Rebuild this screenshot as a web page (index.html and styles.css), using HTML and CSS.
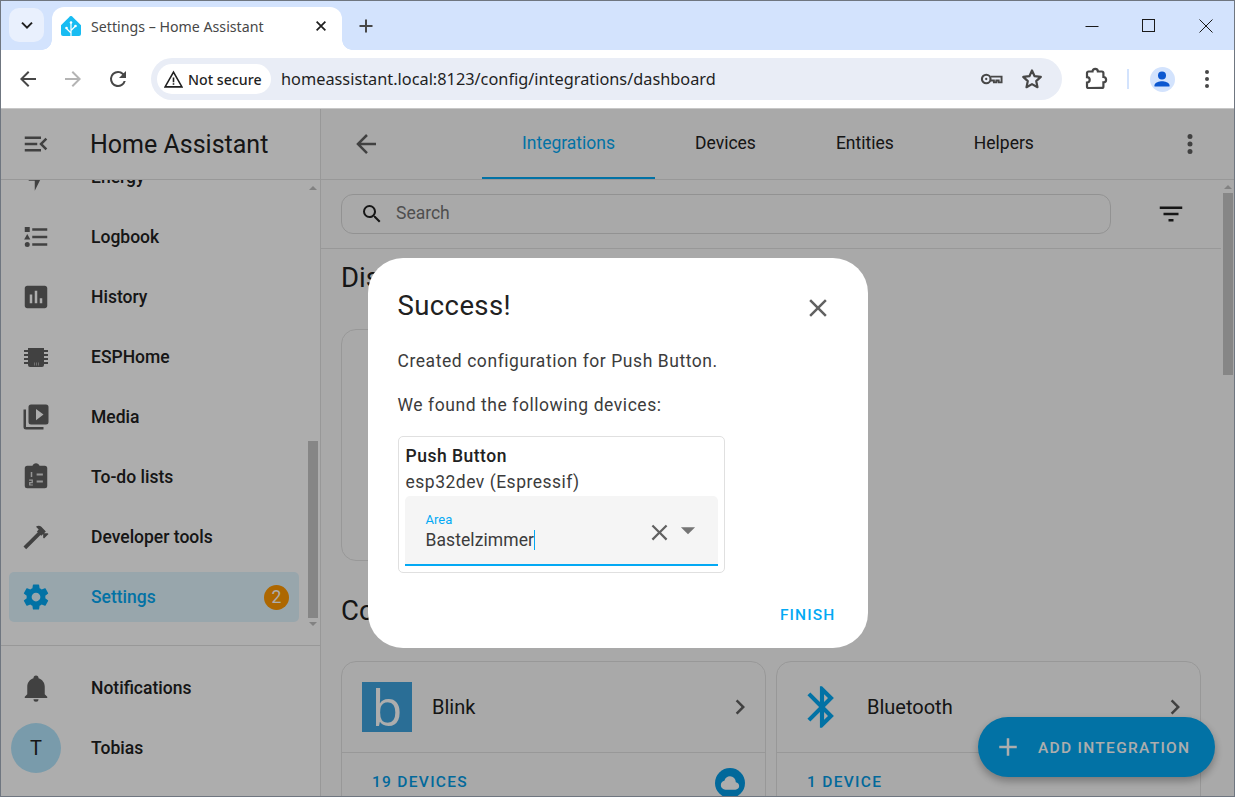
FILE: index.html
```html
<!DOCTYPE html>
<html lang="en">
<head>
<meta charset="utf-8">
<title>Settings – Home Assistant</title>
<link rel="stylesheet" href="styles.css">
</head>
<body>
<div class="window">
  <div class="tabstrip">
    <div class="tab-search"><svg class="ic16" viewBox="0 0 16 16"><path d="M3 5.6 8 10.6 13 5.6" fill="none" stroke="#1f1f1f" stroke-width="2"/></svg></div>
    <div class="tab">
      <svg class="favicon" viewBox="0 0 20 20"><path d="M8.800 .5a1.700 1.700 0 0 1 2.400 0L20 9.300V18a2 2 0 0 1-2 2H2a2 2 0 0 1-2-2V9.300z" fill="#18bcf2"/><path d="M10 20V6.500M10 17 5.500 12.500M10 14.500l4.500-4.500" fill="none" stroke="#fff" stroke-width="1.200"/><circle cx="10" cy="6.500" r="1.300" fill="#fff"/><circle cx="5.500" cy="12" r="1.300" fill="#fff"/><circle cx="14.500" cy="10" r="1.300" fill="#fff"/></svg>
      <span class="tab-title">Settings – Home Assistant</span>
      <svg class="tab-close" viewBox="0 0 16 16"><path d="M3 3 13 13M13 3 3 13" stroke="#1f1f1f" stroke-width="2" fill="none"/></svg>
    </div>
    <svg class="new-tab" viewBox="0 0 16 16"><path d="M8 1.500V14.500M1.500 8H14.500" stroke="#474747" stroke-width="2" fill="none"/></svg>
    <div class="win-controls">
      <div class="win-btn"><svg class="ic14" viewBox="0 0 14 14"><path d="M0.500 7.500H13.500" stroke="#1a1a1a" fill="none"/></svg></div>
      <div class="win-btn"><svg class="ic14" viewBox="0 0 14 14"><rect x="0.500" y="0.500" width="12" height="12" stroke="#1a1a1a" fill="none"/></svg></div>
      <div class="win-btn"><svg class="ic14" viewBox="0 0 14 14"><path d="M0.500 0.500 13.500 13.500M13.500 0.500 0.500 13.500" stroke="#1a1a1a" fill="none"/></svg></div>
    </div>
  </div>

  <div class="toolbar">
    <div class="tb-btn"><svg class="ic24" viewBox="0 0 24 24"><path d="M20 11H7.830l5.590-5.590L12 4l-8 8 8 8 1.410-1.410L7.830 13H20z" fill="#474747"/></svg></div>
    <div class="tb-btn"><svg class="ic24" viewBox="0 0 24 24"><path d="M4 11h12.170l-5.590-5.590L12 4l8 8-8 8-1.410-1.410L16.170 13H4z" fill="#b4b4b4"/></svg></div>
    <div class="tb-btn"><svg class="ic24" viewBox="0 0 24 24"><path d="M17.650 6.350A7.960 7.960 0 0 0 12 4a8 8 0 1 0 7.730 10h-2.080A6 6 0 1 1 12 6c1.660 0 3.140.69 4.220 1.780L13 11h7V4z" fill="#474747"/></svg></div>
    <div class="omnibox">
      <div class="not-secure">
        <svg class="warn" viewBox="0 0 18 18"><path d="M9 2 17 16H1z" fill="none" stroke="#1f1f1f" stroke-width="1.500"/><path d="M9 7V11.500M9 12.500V14" stroke="#1f1f1f" stroke-width="1.500" fill="none"/></svg>
        <span>Not secure</span>
      </div>
      <span class="url">homeassistant.local:8123/config/integrations/dashboard</span>
      <svg class="omni-key" viewBox="0 0 24 14"><circle cx="6.500" cy="7" r="4.500" fill="none" stroke="#474747" stroke-width="2.200"/><circle cx="6.500" cy="7" r="1.200" fill="#474747"/><path d="M11 4.500H22.500V10.500H19.500V8.500H17V10.500H14.500V8.500H11" fill="none" stroke="#474747" stroke-width="2"/></svg>
      <svg class="omni-star" viewBox="0 0 24 24"><path d="M12 3.500l2.600 5.700 6.200.7-4.600 4.200 1.300 6.100L12 17.100l-5.500 3.100 1.300-6.100-4.600-4.200 6.200-.7z" fill="none" stroke="#474747" stroke-width="2.200" stroke-linejoin="round"/></svg>
    </div>
    <svg class="ext" viewBox="0 0 24 24"><path d="M4.500 21a1.500 1.500 0 0 1-1.500-1.500v-4a2.700 2.700 0 0 0 0-5.400V6a1.500 1.500 0 0 1 1.500-1.500h4a2.700 2.700 0 0 1 5.400 0h4A1.500 1.500 0 0 1 19.400 6v4a2.700 2.700 0 0 1 0 5.400v4a1.500 1.500 0 0 1-1.500 1.500z" fill="none" stroke="#474747" stroke-width="2.200"/></svg>
    <div class="tb-sep"></div>
    <div class="profile"><svg class="ic24" viewBox="0 0 24 24"><circle cx="12" cy="8.500" r="4" fill="#0b57d0"/><path d="M4.500 19.500v-1.300c0-2.600 5-4 7.500-4s7.500 1.400 7.500 4v1.300z" fill="#0b57d0"/></svg></div>
    <svg class="tb-dots" viewBox="0 0 6 20"><circle cx="3" cy="3" r="2" fill="#474747"/><circle cx="3" cy="10" r="2" fill="#474747"/><circle cx="3" cy="17" r="2" fill="#474747"/></svg>
  </div>

  <div class="app">
    <aside class="sidebar">
      <div class="side-head">
        <svg class="icon" viewBox="0 0 24 24"><path d="M21,15.610L19.590,17L14.580,12L19.590,7L21,8.390L17.440,12L21,15.610M3,6H16V8H3V6M3,13V11H13V13H3M3,18V16H16V18H3Z"/></svg>
        <span class="side-title">Home Assistant</span>
      </div>
      <div class="nav-wrap">
        <div class="nav-scroll">
          <div class="nav-list">
            <div class="nav-item"><svg class="icon" viewBox="0 0 24 24"><path d="M11 15H6L13 1V9H18L11 23V15Z"/></svg><span>Energy</span></div>
            <div class="nav-item"><svg class="icon" viewBox="0 0 24 24"><path d="M5,9.500L7.500,14H2.500L5,9.500M3,4H7V8H3V4M5,20A2,2 0 0,0 7,18A2,2 0 0,0 5,16A2,2 0 0,0 3,18A2,2 0 0,0 5,20M9,5V7H21V5H9M9,19H21V17H9V19M9,13H21V11H9V13Z"/></svg><span>Logbook</span></div>
            <div class="nav-item"><svg class="icon" viewBox="0 0 24 24"><path d="M19 3H5C3.900 3 3 3.900 3 5V19C3 20.100 3.900 21 5 21H19C20.100 21 21 20.100 21 19V5C21 3.900 20.100 3 19 3M9 17H7V10H9V17M13 17H11V7H13V17M17 17H15V13H17V17Z"/></svg><span>History</span></div>
            <div class="nav-item"><svg class="icon" viewBox="0 0 30 30"><path d="M7 6H23V8H27V10H23V12H27V14H23V16H27V18H23V20H27V22H23V23a2 2 0 0 1-2 2H9a2 2 0 0 1-2-2V22H3V20H7V18H3V16H7V14H3V12H7V10H3V8H7z"/><path d="M13 20.500h.8v3h-.8zM15 20.500h.8v3h-.8zM17 20.500h.8v3h-.8z" fill="#fff" opacity=".55"/></svg><span>ESPHome</span></div>
            <div class="nav-item"><svg class="icon" viewBox="0 0 24 24"><path d="M4,6H2V20A2,2 0 0,0 4,22H18V20H4V6M20,2H8A2,2 0 0,0 6,4V16A2,2 0 0,0 8,18H20A2,2 0 0,0 22,16V4A2,2 0 0,0 20,2M12,14.500V5.500L18,10L12,14.500Z"/></svg><span>Media</span></div>
            <div class="nav-item"><svg class="icon" viewBox="0 0 24 24"><path d="M19 3H14.820C14.400 1.840 13.300 1 12 1C10.700 1 9.600 1.840 9.180 3H5A2 2 0 0 0 3 5V19A2 2 0 0 0 5 21H19A2 2 0 0 0 21 19V5A2 2 0 0 0 19 3Z"/><path d="M12.500 9.200h5v1.500h-5zM12.500 14.800h5v1.500h-5zM7.800 8h1.200v4h-1.200zM6.500 14h3v1h-3zM8.500 15h1v1h-1zM6.500 16h3v1h-3zM6.500 17h1v1h-1zM6.500 18h3v.7h-3z" fill="#ddd"/></svg><span>To-do lists</span></div>
            <div class="nav-item"><svg class="icon" viewBox="0 0 24 24"><path d="M2 19.630L13.430 8.200L12.720 7.500L14.140 6.070L12 3.890C13.200 2.700 15.090 2.700 16.270 3.890L19.870 7.500L18.450 8.910H21.290L22 9.620L18.450 13.210L17.740 12.500V9.620L16.270 11.040L15.560 10.330L4.130 21.760L2 19.630Z"/></svg><span>Developer tools</span></div>
            <div class="nav-item nav-active"><svg class="icon" viewBox="0 0 24 24"><path d="M12,15.500A3.500,3.500 0 0,1 8.500,12A3.500,3.500 0 0,1 12,8.500A3.500,3.500 0 0,1 15.500,12A3.500,3.500 0 0,1 12,15.500M19.430,12.970C19.470,12.650 19.500,12.330 19.500,12C19.500,11.670 19.470,11.340 19.430,11L21.540,9.370C21.730,9.220 21.780,8.950 21.660,8.730L19.660,5.270C19.540,5.050 19.270,4.960 19.050,5.050L16.560,6.050C16.040,5.660 15.500,5.320 14.870,5.070L14.500,2.420C14.460,2.180 14.250,2 14,2H10C9.750,2 9.540,2.180 9.500,2.420L9.130,5.070C8.500,5.320 7.960,5.660 7.440,6.050L4.950,5.050C4.730,4.960 4.460,5.050 4.340,5.270L2.340,8.730C2.210,8.950 2.270,9.220 2.460,9.370L4.570,11C4.530,11.340 4.500,11.670 4.500,12C4.500,12.330 4.530,12.650 4.570,12.970L2.460,14.630C2.270,14.780 2.210,15.050 2.340,15.270L4.340,18.730C4.460,18.950 4.730,19.030 4.950,18.950L7.440,17.940C7.960,18.340 8.500,18.680 9.130,18.930L9.500,21.580C9.540,21.820 9.750,22 10,22H14C14.250,22 14.460,21.820 14.500,21.580L14.870,18.930C15.500,18.670 16.040,18.340 16.560,17.940L19.050,18.950C19.270,19.030 19.540,18.950 19.660,18.730L21.660,15.270C21.780,15.050 21.730,14.780 21.540,14.630L19.430,12.970Z"/></svg><span>Settings</span><b class="badge">2</b></div>
          </div>
        </div>
        <div class="side-scrollbar">
          <i class="arrow-up"></i>
          <div class="side-track"><div class="side-thumb"></div></div>
          <i class="arrow-down"></i>
        </div>
      </div>
      <div class="side-foot">
        <div class="nav-item"><svg class="icon" viewBox="0 0 24 24"><path d="M21,19V20H3V19L5,17V11C5,7.900 7.030,5.170 10,4.290C10,4.190 10,4.100 10,4A2,2 0 0,1 12,2A2,2 0 0,1 14,4C14,4.100 14,4.190 14,4.290C16.970,5.170 19,7.900 19,11V17L21,19M14,21A2,2 0 0,1 12,23A2,2 0 0,1 10,21"/></svg><span>Notifications</span></div>
        <div class="nav-item user"><div class="avatar">T</div><span>Tobias</span></div>
      </div>
    </aside>

    <main class="main">
      <header class="main-head">
        <svg class="icon back" viewBox="0 0 24 24"><path d="M20,11V13H8L13.500,18.500L12.080,19.920L4.160,12L12.080,4.080L13.500,5.500L8,11H20Z"/></svg>
        <nav class="tabs">
          <div class="ha-tab ha-tab-active">Integrations</div>
          <div class="ha-tab">Devices</div>
          <div class="ha-tab">Entities</div>
          <div class="ha-tab">Helpers</div>
        </nav>
        <svg class="icon more" viewBox="0 0 24 24"><path d="M12,16A2,2 0 0,1 14,18A2,2 0 0,1 12,20A2,2 0 0,1 10,18A2,2 0 0,1 12,16M12,10A2,2 0 0,1 14,12A2,2 0 0,1 12,14A2,2 0 0,1 10,12A2,2 0 0,1 12,10M12,4A2,2 0 0,1 14,6A2,2 0 0,1 12,8A2,2 0 0,1 10,6A2,2 0 0,1 12,4Z"/></svg>
      </header>
      <div class="main-body">
        <div class="main-scroll">
          <div class="search-row">
            <div class="search-box">
              <svg class="search-ic" viewBox="0 0 24 24"><path d="M9.500,3A6.500,6.500 0 0,1 16,9.500C16,11.110 15.410,12.590 14.440,13.730L14.710,14H15.500L20.500,19L19,20.500L14,15.500V14.710L13.730,14.440C12.590,15.410 11.110,16 9.500,16A6.500,6.500 0 0,1 3,9.500A6.500,6.500 0 0,1 9.500,3M9.500,5C7,5 5,7 5,9.500C5,12 7,14 9.500,14C12,14 14,12 14,9.500C14,7 12,5 9.500,5Z"/></svg>
              <span class="search-text">Search</span>
            </div>
            <svg class="filter-ic" viewBox="0 0 24 24"><path d="M6,13H18V11H6M3,6V8H21V6M10,18H14V16H10V18Z"/></svg>
          </div>
          <div class="content">
            <h2 class="section">Discovered</h2>
            <div class="disc-card"></div>
            <h2 class="section section-next">Configured</h2>
            <div class="cards">
              <article class="card">
                <div class="card-head">
                  <div class="blink-logo">b</div>
                  <span class="card-name">Blink</span>
                  <svg class="icon chev" viewBox="0 0 24 24"><path d="M8.590,16.580L13.170,12L8.590,7.410L10,6L16,12L10,18L8.590,16.580Z"/></svg>
                </div>
                <div class="card-foot">
                  <span class="count">19 DEVICES</span>
                  <div class="cloud"><svg viewBox="0 0 24 24"><path d="M6.500 20Q4.220 20 2.610 18.430 1 16.850 1 14.580 1 12.630 2.170 11.100 3.350 9.570 5.250 9.150 5.880 6.850 7.750 5.430 9.630 4 12 4 14.930 4 16.960 6.040 19 8.070 19 11 20.730 11.200 21.860 12.500 23 13.780 23 15.500 23 17.380 21.690 18.690 20.380 20 18.500 20Z"/></svg></div>
                </div>
              </article>
              <article class="card">
                <div class="card-head">
                  <svg class="bt-logo" viewBox="0 0 24 24"><path d="M14.880,16.290L13,18.170V14.410M13,5.830L14.880,7.710L13,9.580M17.710,7.710L12,2H11V9.580L6.410,5L5,6.410L10.590,12L5,17.580L6.410,19L11,14.410V22H12L17.710,16.290L13.410,12L17.710,7.710Z"/></svg>
                  <span class="card-name">Bluetooth</span>
                  <svg class="icon chev" viewBox="0 0 24 24"><path d="M8.590,16.580L13.170,12L8.590,7.410L10,6L16,12L10,18L8.590,16.580Z"/></svg>
                </div>
                <div class="card-foot">
                  <span class="count">1 DEVICE</span>
                </div>
              </article>
            </div>
          </div>
        </div>
        <div class="main-scrollbar">
          <i class="arrow-up"></i>
          <div class="main-thumb"></div>
        </div>
      </div>
      <div class="fab">
        <svg viewBox="0 0 24 24"><path d="M19,13H13V19H11V13H5V11H11V5H13V11H19V13Z"/></svg>
        <span>ADD INTEGRATION</span>
      </div>
    </main>

    <div class="scrim">
      <section class="dialog">
        <div class="dialog-head">
          <h1>Success!</h1>
          <svg class="dialog-close" viewBox="0 0 24 24"><path d="M19,6.410L17.590,5L12,10.590L6.410,5L5,6.410L10.590,12L5,17.590L6.410,19L12,13.410L17.590,19L19,17.590L13.410,12L19,6.410Z"/></svg>
        </div>
        <p class="dialog-text">Created configuration for Push Button.</p>
        <p class="dialog-text dialog-text-2">We found the following devices:</p>
        <div class="device">
          <div class="device-name">Push Button</div>
          <div class="device-model">esp32dev (Espressif)</div>
          <div class="field">
            <div class="field-text">
              <div class="field-label">Area</div>
              <div class="field-value">Bastelzimmer<i class="caret"></i></div>
            </div>
            <svg class="field-x" viewBox="0 0 24 24"><path d="M19,6.410L17.590,5L12,10.590L6.410,5L5,6.410L10.590,12L5,17.590L6.410,19L12,13.410L17.590,19L19,17.590L13.410,12L19,6.410Z"/></svg>
            <svg class="field-drop" viewBox="0 0 24 24"><path d="M7,10L12,15L17,10H7Z"/></svg>
          </div>
        </div>
        <div class="dialog-actions"><span class="finish">FINISH</span></div>
      </section>
    </div>
  </div>
</div>
</body>
</html>
```
FILE: styles.css
```css
* { box-sizing: border-box; }
html, body { margin: 0; padding: 0; height: 100%; overflow: hidden; }
body { font-family: Roboto, "Liberation Sans", sans-serif; color: #212121; background: #fff; }

.window { width: 1235px; height: 797px; display: flex; flex-direction: column; border: 1px solid #6f7680; overflow: hidden; position: relative; }

/* Browser chrome */
.tabstrip { height: 49px; flex: none; background: #d3e3fd; display: flex; align-items: flex-end; padding-left: 8px; }
.tab-search { width: 35px; height: 34px; margin-bottom: 8px; border-radius: 10px; background: #e9f0fd; display: flex; align-items: center; justify-content: center; }
.ic16 { width: 16px; height: 16px; }
.ic14 { width: 14px; height: 14px; display: block; }
.ic24 { width: 24px; height: 24px; display: block; }
.tab { position: relative; margin-left: 8px; width: 290px; height: 43px; background: #fff; border-radius: 12px 12px 0 0; display: flex; align-items: center; padding: 0 14px 5px 9px; }
.tab::before, .tab::after { content: ""; position: absolute; bottom: 0; width: 10px; height: 10px; background: radial-gradient(circle at 0 0, #d3e3fd 9.5px, #fff 10px); }
.tab::before { left: -10px; }
.tab::after { right: -10px; background: radial-gradient(circle at 100% 0, #d3e3fd 9.5px, #fff 10px); }
.favicon { width: 20px; height: 20px; flex: none; }
.tab-title { margin-left: 10px; flex: 1; font: 14.2px "Noto Sans", sans-serif; color: #474747; white-space: nowrap; }
.tab-close { width: 14px; height: 14px; }
.new-tab { width: 16px; height: 16px; margin: 0 0 16px 16px; }
.win-controls { margin-left: auto; display: flex; align-self: stretch; }
.win-btn { width: 57px; display: flex; align-items: center; justify-content: center; }

.toolbar { height: 59px; flex: none; background: #fff; border-bottom: 1px solid #c7c7c7; border-radius: 9px 9px 0 0; display: flex; align-items: center; padding-left: 4px; position: relative; }
.tb-btn { width: 45px; display: flex; justify-content: center; }
.omnibox { margin-left: 11px; width: 911px; height: 42px; border-radius: 21px; background: #e9edf6; display: flex; align-items: center; padding: 0 18px 0 6px; }
.not-secure { width: 114px; height: 30px; border-radius: 15px; background: #fff; display: flex; align-items: center; padding-left: 7px; font: 500 14.2px "Noto Sans", sans-serif; color: #1f1f1f; white-space: nowrap; }
.warn { width: 19px; height: 19px; margin-right: 5px; flex: none; }
.url { margin-left: 10px; flex: 1; font: 16.32px "Noto Sans", sans-serif; color: #1f1f1f; white-space: nowrap; }
.omni-key { width: 23px; height: 14px; }
.omni-star { width: 24px; height: 24px; margin-left: 17px; }
.ext { width: 24px; height: 24px; margin-left: 22px; }
.tb-sep { width: 2px; height: 20px; margin-left: 19px; background: #d3e3fd; }
.profile { width: 25px; height: 25px; margin-left: 21px; border-radius: 50%; background: #d3e3fd; overflow: hidden; }
.tb-dots { width: 6px; height: 20px; margin-left: 29px; }

/* App */
.app { flex: 1; min-height: 0; display: flex; position: relative; background: #fafafa; }
.icon { width: 30px; height: 30px; flex: none; fill: #616161; display: block; }

.sidebar { width: 320px; flex: none; background: #fff; border-right: 1px solid #e0e0e0; display: flex; flex-direction: column; }
.side-head { height: 71px; flex: none; display: flex; align-items: center; padding-left: 20px; border-bottom: 1px solid #e0e0e0; padding-bottom: 1px; }
.side-title { margin-left: 39px; padding-top: 2px; font-size: 25px; white-space: nowrap; }
.nav-wrap { height: 465px; flex: none; display: flex; overflow: hidden; }
.nav-scroll { flex: 1; overflow: hidden; }
.nav-list { margin-top: -28px; display: flex; flex-direction: column; gap: 10px; padding: 0 0 0 8px; }
.nav-item { height: 50px; display: flex; align-items: center; padding-left: 12px; border-radius: 5px; font-size: 17.500px; font-weight: 500; color: #212121; white-space: nowrap; }
.nav-item span { margin-left: 40px; }
.nav-active { color: #03a9f4; background: rgba(3, 169, 244, .12); }
.nav-active .icon { fill: #03a9f4; }
.badge { margin-left: auto; margin-right: 10px; width: 25px; height: 25px; border-radius: 50%; background: #ff9800; color: #fff; font-weight: 400; font-size: 17.500px; display: flex; align-items: center; justify-content: center; }
.side-scrollbar { width: 21px; flex: none; display: flex; flex-direction: column; align-items: flex-start; padding: 6px 0 0 9px; }
.arrow-up, .arrow-down { display: block; width: 0; height: 0; border-left: 4px solid transparent; border-right: 4px solid transparent; margin-left: 1px; }
.arrow-up { border-bottom: 4px solid #c0c0c0; }
.arrow-down { border-top: 4px solid #c0c0c0; margin-top: 4px; }
.side-track { height: 428px; width: 10px; display: flex; flex-direction: column; justify-content: flex-end; }
.side-thumb { height: 177px; background: #c6c6c6; }
.side-foot { flex: 1; border-top: 1px solid #e0e0e0; padding: 17px 8px 0; display: flex; flex-direction: column; gap: 10px; }
.user { padding-left: 2px; }
.user span { margin-left: 30px; }
.avatar { width: 50px; height: 50px; border-radius: 50%; background: #b3e5fc; display: flex; align-items: center; justify-content: center; font-size: 20px; font-weight: 400; flex: none; }

.main { flex: 1; min-width: 0; display: flex; flex-direction: column; position: relative; overflow: hidden; }
.main-head { height: 71px; flex: none; display: flex; align-items: center; border-bottom: 1px solid #e0e0e0; padding-left: 30px; }
.tabs { margin-left: 101px; align-self: stretch; display: flex; }
.ha-tab { padding: 0 40px; display: flex; align-items: center; font-size: 17.500px; color: #212121; border-bottom: 2px solid transparent; white-space: nowrap; }
.ha-tab-active { color: #03a9f4; border-bottom-color: #03a9f4; }
.more { margin-left: auto; margin-right: 29px; }
.main-body { flex: 1; min-height: 0; display: flex; }
.main-scroll { flex: 1; min-width: 0; overflow: hidden; }
.main-scrollbar { width: 13px; flex: none; padding: 5px 1px 0 2px; display: flex; flex-direction: column; }
.main-thumb { margin-top: 4px; height: 182px; background: #c6c6c6; }
.search-row { height: 69px; display: flex; align-items: center; border-bottom: 1px solid #e0e0e0; padding-left: 20px; }
.search-box { width: 770px; height: 40px; border: 1px solid #d8d8d8; border-radius: 12px; display: flex; align-items: center; padding-left: 18px; color: #757575; font-size: 17.500px; }
.search-ic { width: 24px; height: 24px; fill: #212121; margin-right: 12px; }
.search-text { padding-bottom: 2px; }
.filter-ic { width: 30px; height: 30px; fill: #212121; margin-left: 45px; }
.content { padding: 9px 0 0 20px; }
.section { margin: 0; font-size: 27.500px; font-weight: 400; line-height: 40px; color: #212121; white-space: nowrap; }
.section-next { margin-top: 30px; }
.disc-card { margin-top: 31px; width: 425px; height: 232px; border: 1px solid #e0e0e0; border-radius: 15px; }
.cards { margin-top: 30px; display: flex; gap: 10px; }
.card { width: 425px; height: 180px; flex: none; border: 1px solid #e0e0e0; border-radius: 15px; background: #fafafa; }
.card-head { height: 91px; display: flex; align-items: center; padding: 0 10px 0 20px; border-bottom: 1px solid #e0e0e0; }
.blink-logo { width: 50px; height: 50px; flex: none; background: #3fa3dd; color: #fff; font: 50px/50px "Open Sans", sans-serif; text-align: center; overflow: hidden; }
.bt-logo { width: 50px; height: 50px; flex: none; fill: #03a9f4; }
.card-name { margin-left: 20px; flex: 1; font-size: 20px; color: #212121; }
.chev { flex: none; }
.card-foot { height: 60px; display: flex; align-items: flex-start; justify-content: space-between; padding: 15px 20px 0 30px; }
.count { font-size: 15.500px; font-weight: 500; letter-spacing: 1.300px; color: #039be5; line-height: 30px; margin-top: -1px; }
.cloud { width: 30px; height: 30px; border-radius: 50%; background: #039be5; display: flex; align-items: center; justify-content: center; }
.cloud svg { width: 20px; height: 20px; fill: #fff; }

.fab { position: absolute; left: 657px; top: 608px; width: 237px; height: 60px; border-radius: 30px; background: #03a9f4; color: #fff; display: flex; align-items: center; padding-left: 15px; box-shadow: 0 4px 8px rgba(0,0,0,.3); }
.fab svg { width: 30px; height: 30px; fill: #fff; flex: none; }
.fab span { margin-left: 15px; padding-top: 2px; font-size: 15.500px; font-weight: 500; letter-spacing: 1.300px; white-space: nowrap; }

/* Dialog */
.scrim { position: absolute; inset: 0; background: rgba(0, 0, 0, .32); display: flex; align-items: center; justify-content: center; }
.dialog { width: 500px; height: 390px; background: #fff; border-radius: 35px; padding: 0 30px; display: flex; flex-direction: column; }
.dialog-head { height: 93px; display: flex; align-items: flex-start; justify-content: space-between; padding-top: 29px; flex: none; }
.dialog-head h1 { margin: 0; font-size: 27.500px; font-weight: 400; line-height: 38px; letter-spacing: .4px; color: #212121; }
.dialog-close { width: 30px; height: 30px; fill: #616161; margin: 6px 5px 0 0; }
.dialog-text { margin: 0; font-size: 17.500px; line-height: 20px; letter-spacing: .56px; color: #3c3c3c; }
.dialog-text-2 { margin-top: 24px; }
.device { margin-top: 21px; width: 327px; height: 137px; border: 1px solid #e0e0e0; border-radius: 5px; padding: 6px 6px 0 6px; flex: none; }
.device-name { padding-left: 1px; font-size: 17.500px; font-weight: 500; line-height: 26px; letter-spacing: .5px; color: #212121; }
.device-model { padding-left: 1px; font-size: 17.500px; line-height: 26px; letter-spacing: .5px; color: #3c3c3c; }
.field { height: 70px; margin-top: 1px; background: #f5f5f5; border-radius: 5px 5px 0 0; border-bottom: 2px solid #03a9f4; display: flex; align-items: center; padding: 0 13px 0 21px; }
.field-text { flex: 1; padding-top: 4px; }
.field-label { font-size: 13px; line-height: 16px; color: #03a9f4; }
.field-value { font-size: 17.500px; line-height: 24px; letter-spacing: .08px; color: #3c3c3c; white-space: nowrap; }
.caret { display: inline-block; width: 1px; height: 20px; background: #03a9f4; vertical-align: -4px; }
.field-x { width: 27px; height: 27px; fill: #616161; flex: none; margin-top: 6px; }
.field-drop { width: 34px; height: 34px; fill: #757575; flex: none; margin-left: -2.500px; }
.dialog-actions { margin-top: 30px; display: flex; justify-content: flex-end; padding-right: 2px; }
.finish { font-size: 15.500px; font-weight: 500; letter-spacing: 1.150px; line-height: 24px; color: #03a9f4; }
```
